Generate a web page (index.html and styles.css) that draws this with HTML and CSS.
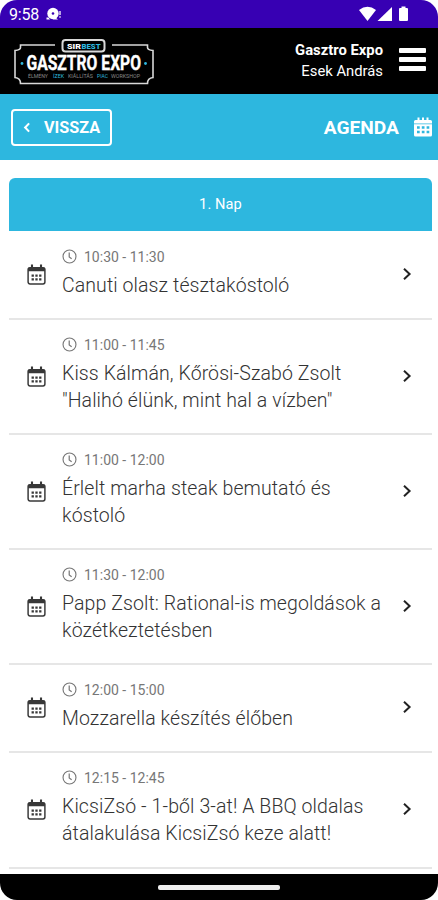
FILE: index.html
```
<!DOCTYPE html>
<html lang="hu">
<head>
    <meta charset="UTF-8">
    <meta name="viewport" content="width=device-width, initial-scale=1.0">
    <title>Gasztro Expo - Agenda</title>
    <link rel="stylesheet" href="styles.css">
</head>
<body>

<!-- shared icons -->
<svg class="sprite" xmlns="http://www.w3.org/2000/svg">
    <symbol id="calendar" viewBox="0 0 18 20">
        <rect x="1" y="3.5" width="16" height="15.5" rx="1.8" fill="none" stroke="currentColor" stroke-width="1.4"/>
        <path d="M1 3.5h16v3.500h-16zM3.7 0.5h2v4h-2zM12.3 0.5h2v4h-2z" fill="currentColor"/>
        <path d="M4.3 11h9.400M4.3 14.6h9.400" stroke="currentColor" stroke-width="2.100" stroke-dasharray="2.200 1.400" fill="none"/>
    </symbol>
    <symbol id="clock" viewBox="0 0 16 16">
        <circle cx="8" cy="8" r="6.9" fill="none" stroke="currentColor" stroke-width="1.2"/>
        <path d="M7.7 3.8v4.6l2.6 1.9" fill="none" stroke="currentColor" stroke-width="1.3"/>
    </symbol>
    <symbol id="arrow" viewBox="0 0 10 14">
        <path d="M2 1.8L7.6 7L2 12.2" fill="none" stroke="currentColor" stroke-width="2"/>
    </symbol>
</svg>

<div class="phone">
    <div class="status">
        <span class="status-time">9:58</span>
        <svg class="status-app" viewBox="0 0 16 14" width="16" height="14">
            <path d="M0.500 10.500h2l1.500 2h-3.500z" fill="#fff"/>
            <circle cx="7" cy="6.500" r="5.700" fill="#fff"/>
            <path d="M9 10l3 2.500h-5z" fill="#fff"/>
            <circle cx="7" cy="6.500" r="1.300" fill="#3700b3"/>
            <path d="M14 4v4M14 9.200v1.500" stroke="#fff" stroke-width="1.300"/>
        </svg>
        <svg class="status-icons" viewBox="0 0 50 16" width="50" height="16">
            <path d="M0 4Q8.500-2.500 17 4L8.500 15z" fill="#fff"/>
            <path d="M18.500 15L33 1V15z" fill="#fff"/>
            <path d="M42.500 0.500h4v1.500h1.500q1 0 1 1V14q0 1-1 1h-7q-1 0-1-1V3q0-1 1-1h1.500z" fill="#fff"/>
        </svg>
    </div>

    <header class="header">
        <svg class="logo" viewBox="0 0 140 47" width="140" height="47">
            <g fill="none" stroke="#d8d8d8" stroke-width="1.600">
                <path d="M41 7H6.500V9.500Q6.500 12 1 12.500V39.500Q6.500 40 6.500 45.500H133.500Q133.500 40 139 39.500V12.500Q133.500 12 133.500 9.500V7H98"/>
                <rect x="48.500" y="2" width="42" height="11.500" rx="3" stroke-width="2"/>
            </g>
            <text class="logo-small" x="53" y="10.500" textLength="14" lengthAdjust="spacingAndGlyphs" fill="#fff">SIR</text>
            <text class="logo-small" x="67.500" y="10.500" textLength="19" lengthAdjust="spacingAndGlyphs" fill="#2db7df">BEST</text>
            <text class="logo-name" x="12.500" y="32.300" textLength="114.500" lengthAdjust="spacingAndGlyphs">GASZTRO EXPO</text>
            <circle cx="8" cy="25.500" r="1.400" fill="#2db7df"/>
            <circle cx="131.500" cy="25.500" r="1.400" fill="#2db7df"/>
            <g class="logo-line">
                <text x="14" y="39.500" textLength="20" lengthAdjust="spacingAndGlyphs">ÉLMÉNY</text>
                <text class="blue" x="39" y="39.500" textLength="11" lengthAdjust="spacingAndGlyphs">ÍZEK</text>
                <text x="54" y="39.500" textLength="25" lengthAdjust="spacingAndGlyphs">KIÁLLÍTÁS</text>
                <text class="blue" x="83" y="39.500" textLength="11" lengthAdjust="spacingAndGlyphs">PIAC</text>
                <text x="97" y="39.500" textLength="29" lengthAdjust="spacingAndGlyphs">WORKSHOP</text>
            </g>
        </svg>
        <div class="user">
            <b>Gasztro Expo</b>
            <span>Esek András</span>
        </div>
        <div class="menu"><i></i><i></i><i></i></div>
    </header>

    <div class="title-bar">
        <a class="back">
            <svg viewBox="0 0 8 12" width="8" height="11"><path d="M6.300 1.500L2 6l4.300 4.500" fill="none" stroke="#fff" stroke-width="2.300"/></svg>
            <span>VISSZA</span>
        </a>
        <h1>AGENDA</h1>
        <svg class="title-icon" viewBox="0 0 18 20" width="18" height="20">
            <path d="M0 6.500V4.500Q0 3 1.500 3H3.500V.5h2V3h2.500V.5h2V3h2.500V.5h2V3h2Q18 3 18 4.500v2z" fill="#fff"/>
            <path d="M0 7.300h18v10.700q0 1.500-1.500 1.500h-15Q0 19.500 0 18z" fill="#fff"/>
            <path d="M3 10.500h12.500M3 15h12.500" stroke="#2db7df" stroke-width="2.400" stroke-dasharray="2.700 2.100"/>
        </svg>
    </div>

    <main class="agenda">
        <div class="day">1. Nap</div>
        <div class="event">
            <svg class="cal"><use href="#calendar"/></svg>
            <div class="info">
                <div class="time"><svg><use href="#clock"/></svg>10:30 - 11:30</div>
                <div class="name">Canuti olasz tésztakóstoló</div>
            </div>
            <svg class="arrow"><use href="#arrow"/></svg>
        </div>
        <div class="event">
            <svg class="cal"><use href="#calendar"/></svg>
            <div class="info">
                <div class="time"><svg><use href="#clock"/></svg>11:00 - 11:45</div>
                <div class="name">Kiss Kálmán, Kőrösi-Szabó Zsolt<br>"Halihó élünk, mint hal a vízben"</div>
            </div>
            <svg class="arrow"><use href="#arrow"/></svg>
        </div>
        <div class="event">
            <svg class="cal"><use href="#calendar"/></svg>
            <div class="info">
                <div class="time"><svg><use href="#clock"/></svg>11:00 - 12:00</div>
                <div class="name">Érlelt marha steak bemutató és<br>kóstoló</div>
            </div>
            <svg class="arrow"><use href="#arrow"/></svg>
        </div>
        <div class="event">
            <svg class="cal"><use href="#calendar"/></svg>
            <div class="info">
                <div class="time"><svg><use href="#clock"/></svg>11:30 - 12:00</div>
                <div class="name">Papp Zsolt: Rational-is megoldások a<br>közétkeztetésben</div>
            </div>
            <svg class="arrow"><use href="#arrow"/></svg>
        </div>
        <div class="event">
            <svg class="cal"><use href="#calendar"/></svg>
            <div class="info">
                <div class="time"><svg><use href="#clock"/></svg>12:00 - 15:00</div>
                <div class="name">Mozzarella készítés élőben</div>
            </div>
            <svg class="arrow"><use href="#arrow"/></svg>
        </div>
        <div class="event">
            <svg class="cal"><use href="#calendar"/></svg>
            <div class="info">
                <div class="time"><svg><use href="#clock"/></svg>12:15 - 12:45</div>
                <div class="name">KicsiZsó - 1-ből 3-at! A BBQ oldalas<br>átalakulása KicsiZsó keze alatt!</div>
            </div>
            <svg class="arrow"><use href="#arrow"/></svg>
        </div>
    </main>

    <div class="nav"><span></span></div>
</div>

</body>
</html>
```
FILE: styles.css
```
* {
    box-sizing: border-box;
}

body {
    margin: 0;
    background: #fff;
    font-family: Roboto, "Liberation Sans", sans-serif;
}

.sprite {
    display: none;
}

.phone {
    display: flex;
    flex-direction: column;
    width: 438px;
    height: 900px;
    border-radius: 17px;
    overflow: hidden;
    background: #fff;
}

.status {
    display: flex;
    align-items: center;
    height: 28px;
    padding: 0 29px 0 9px;
    background: #3700b3;
    color: #fff;
}

.status-time {
    font-size: 16px;
    letter-spacing: -0.2px;
}

.status-app {
    margin-left: 7px;
}

.status-icons {
    margin-left: auto;
}

.header {
    display: flex;
    align-items: center;
    height: 66px;
    padding: 0 12px 0 14px;
    background: #000;
    color: #fff;
}

.logo {
    overflow: visible;
}

.logo-name {
    font-size: 20.5px;
    font-weight: 700;
    fill: #fff;
    stroke: #fff;
    stroke-width: 0.4px;
}

.logo-small {
    font-size: 7.5px;
    font-weight: 900;
}

.logo-line {
    font-size: 4.5px;
    fill: #888;
}

.logo-line .blue {
    fill: #2db7df;
}

.user {
    display: flex;
    flex-direction: column;
    margin-left: auto;
    text-align: right;
    font-size: 14.8px;
    line-height: 21px;
}

.menu {
    display: flex;
    flex-direction: column;
    gap: 4px;
    margin: -3px 0 0 16px;
}

.menu i {
    width: 27px;
    height: 5px;
    border-radius: 1px;
    background: #fff;
}

.title-bar {
    display: flex;
    align-items: center;
    height: 66px;
    padding: 0 6px 0 11px;
    background: #2db7df;
    color: #fff;
}

.back {
    display: flex;
    align-items: center;
    width: 101px;
    height: 37px;
    padding-left: 10px;
    border: 2px solid #fff;
    border-radius: 4px;
    font-size: 16.2px;
    font-weight: 700;
}

.back span {
    margin-left: 13px;
}

.title-bar h1 {
    margin: 0 15px 0 auto;
    font-size: 19.2px;
    font-weight: 700;
}

.agenda {
    flex: 1;
    margin: 18px 6px 0 9px;
}

.day {
    height: 53px;
    margin-bottom: 1px;
    border-radius: 6px 6px 0 0;
    background: #2db7df;
    color: #fff;
    font-size: 14.6px;
    letter-spacing: 0.1px;
    line-height: 53px;
    text-align: center;
}

.event {
    display: flex;
    align-items: center;
    padding: 12px 20px 19.1px 18px;
    border-bottom: 2px solid #e6e6e6;
}

.cal {
    width: 19px;
    height: 21px;
    margin-top: 6px;
    color: #383838;
}

.info {
    flex: 1;
    margin-left: 16px;
    white-space: nowrap;
}

.time {
    display: flex;
    align-items: center;
    height: 25px;
    margin-bottom: 3px;
    color: #777;
    font-size: 14px;
}

.time svg {
    width: 15px;
    height: 15px;
    margin-right: 7px;
}

.name {
    color: #333;
    font-size: 19.5px;
    font-weight: 300;
    letter-spacing: 0.09px;
    line-height: 27px;
}

.arrow {
    width: 10px;
    height: 14px;
    margin-top: 5px;
    color: #222;
}

.nav {
    display: flex;
    align-items: center;
    justify-content: center;
    height: 26px;
    background: #000;
}

.nav span {
    width: 122px;
    height: 5px;
    border-radius: 2px;
    background: #eee;
}
```
